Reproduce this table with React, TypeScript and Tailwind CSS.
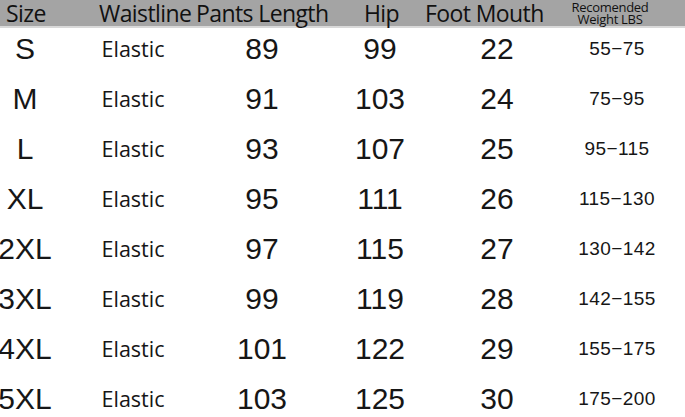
import React from 'react';

const ROWS = [
    { size: 'S', length: '89', hip: '99', foot: '22', weight: '55−75' },
    { size: 'M', length: '91', hip: '103', foot: '24', weight: '75−95' },
    { size: 'L', length: '93', hip: '107', foot: '25', weight: '95−115' },
    { size: 'XL', length: '95', hip: '111', foot: '26', weight: '115−130' },
    { size: '2XL', length: '97', hip: '115', foot: '27', weight: '130−142' },
    { size: '3XL', length: '99', hip: '119', foot: '28', weight: '142−155' },
    { size: '4XL', length: '101', hip: '122', foot: '29', weight: '155−175' },
    { size: '5XL', length: '103', hip: '125', foot: '30', weight: '175−200' },
];

const num = "font-['Liberation_Sans',Arial,sans-serif] text-[30px] leading-[34px] text-[#161616]";

export default function App() {
    return (
        <div className="w-[685px] h-[417px] overflow-hidden bg-white">
            <div className="flex h-[28px] items-center bg-[#a4a4a4] border-b-2 border-[#d9d9d9] font-['Open_Sans',sans-serif] text-[23px] leading-[26px] tracking-[-0.6px] text-[#111] whitespace-nowrap">
                <div className="w-[99px] shrink-0 pl-[6px]">Size</div>
                <div className="w-[97px] shrink-0">Waistline</div>
                <div className="w-[168px] shrink-0">Pants Length</div>
                <div className="w-[61px] shrink-0">Hip</div>
                <div className="w-[145px] shrink-0">Foot Mouth</div>
                <div className="flex w-[80px] shrink-0 flex-col items-center text-[13px] leading-[12.5px] tracking-[-0.3px]">
                    <span>Recomended</span>
                    <span>Weight LBS</span>
                </div>
            </div>
            <div className="-mt-[2px]">
                {ROWS.map((r) => (
                    <div key={r.size} className="flex h-[50px] items-center pb-[4px] whitespace-nowrap">
                        <div className={`flex w-[50px] shrink-0 justify-center ${num}`}>{r.size}</div>
                        <div className="flex w-[166px] shrink-0 justify-center font-['Open_Sans',sans-serif] text-[21.5px] leading-[26px] text-[#161616]">Elastic</div>
                        <div className={`flex w-[92px] shrink-0 justify-center ${num}`}>{r.length}</div>
                        <div className={`flex w-[144px] shrink-0 justify-center ${num}`}>{r.hip}</div>
                        <div className={`flex w-[90px] shrink-0 justify-center ${num}`}>{r.foot}</div>
                        <div className="flex w-[150px] shrink-0 justify-center font-['Liberation_Sans',Arial,sans-serif] text-[19px] leading-[22px] tracking-[0.4px] text-[#161616]">{r.weight}</div>
                    </div>
                ))}
            </div>
        </div>
    );
}
